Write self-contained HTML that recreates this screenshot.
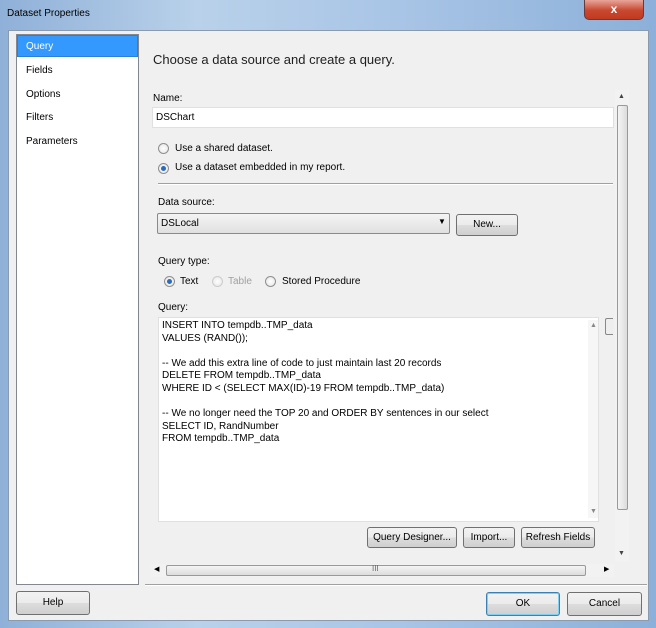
<!DOCTYPE html>
<html><head><style>
*{margin:0;padding:0;box-sizing:border-box}
body{width:656px;height:628px;overflow:hidden;font-family:"Liberation Sans",sans-serif;font-size:10px;color:#000;background:#6d8db5;position:relative}
.a{position:absolute}
.frame{left:0;top:0;width:656px;height:628px;background:linear-gradient(90deg,#8fb0d8,#b9d1ea 30%,#a9c5e6 60%,#8cb0d9);}
.client{left:8px;top:30px;width:641px;height:591px;background:#f0f0f0;border:1px solid #8a9bb0}
.btn{position:absolute;border:1px solid #707070;border-radius:3px;background:linear-gradient(#f2f2f2,#ebebeb 50%,#dddddd 50%,#cfcfcf);text-align:center;font-size:10px}
.radio{position:absolute;width:11px;height:11px;border-radius:50%;border:1px solid #8f8f8f;background:radial-gradient(#fff,#e3e3e3)}
.radio.on::after{content:"";position:absolute;left:2px;top:2px;width:5px;height:5px;border-radius:50%;background:#2a6bbd}
.t{position:absolute;white-space:nowrap}
</style></head><body>
<div class="a frame"></div>
<div class="t" style="left:7px;top:8px;font-size:10px">Dataset Properties</div>
<div class="a" style="left:584px;top:0;width:60px;height:20px;border:1px solid #6a3a3a;border-top:none;border-radius:0 0 5px 5px;background:linear-gradient(#e8a59a,#c8482f 55%,#c13a20);color:#fff;text-align:center;font-weight:bold;font-size:12px;line-height:18px">x</div>
<div class="a client"></div>
<div class="a" style="left:16px;top:34px;width:123px;height:551px;background:#fff;border:1px solid #828790"></div>
<div class="a" style="left:17px;top:35px;width:121px;height:22px;background:#3399ff;border:1px solid #2c7fd9"></div>
<div class="t" style="left:26px;top:41px;color:#fff">Query</div>
<div class="t" style="left:26px;top:65px">Fields</div>
<div class="t" style="left:26px;top:89px">Options</div>
<div class="t" style="left:26px;top:112px">Filters</div>
<div class="t" style="left:26px;top:136px">Parameters</div>
<div class="t" style="left:153px;top:52px;font-size:13px;color:#1e1e1e">Choose a data source and create a query.</div>
<div class="t" style="left:153px;top:93px">Name:</div>
<div class="a" style="left:152px;top:107px;width:462px;height:21px;background:#fff;border:1px solid #e0e0e0"></div>
<div class="t" style="left:156px;top:112px">DSChart</div>
<div class="radio" style="left:158px;top:143px"></div>
<div class="t" style="left:175px;top:143px">Use a shared dataset.</div>
<div class="radio on" style="left:158px;top:163px"></div>
<div class="t" style="left:175px;top:162px">Use a dataset embedded in my report.</div>
<div class="a" style="left:158px;top:183px;width:455px;height:2px;border-top:1px solid #a0a0a0;border-bottom:1px solid #fff"></div>
<div class="t" style="left:158px;top:197px">Data source:</div>
<div class="a" style="left:157px;top:213px;width:293px;height:21px;border:1px solid #8a8a8a;border-radius:2px;background:linear-gradient(#f4f4f4,#e0e0e0)"></div>
<div class="t" style="left:161px;top:218px">DSLocal</div>
<div class="t" style="left:438px;top:217px;font-size:8px">▼</div>
<div class="btn" style="left:456px;top:214px;width:62px;height:22px;line-height:20px">New...</div>
<div class="t" style="left:158px;top:256px">Query type:</div>
<div class="radio on" style="left:164px;top:276px"></div>
<div class="t" style="left:180px;top:276px">Text</div>
<div class="radio" style="left:212px;top:276px;border-color:#ccc"></div>
<div class="t" style="left:228px;top:276px;color:#a0a0a0">Table</div>
<div class="radio" style="left:265px;top:276px"></div>
<div class="t" style="left:282px;top:276px">Stored Procedure</div>
<div class="t" style="left:158px;top:302px">Query:</div>
<div class="a" style="left:158px;top:317px;width:441px;height:205px;background:#fff;border:1px solid #e0e0e0"></div>
<div class="a" style="left:588px;top:320px;width:10px;height:198px;background:#f6f6f6"></div>
<div class="t" style="left:590px;top:322px;font-size:7px;color:#888">▲</div>
<div class="t" style="left:590px;top:508px;font-size:7px;color:#888">▼</div>
<div class="t" style="left:162px;top:320px;line-height:12.6px;font-size:10px">INSERT INTO tempdb..TMP_data<br>VALUES (RAND());<br><br>-- We add this extra line of code to just maintain last 20 records<br>DELETE FROM tempdb..TMP_data<br>WHERE ID &lt; (SELECT MAX(ID)-19 FROM tempdb..TMP_data)<br><br>-- We no longer need the TOP 20 and ORDER BY sentences in our select<br>SELECT ID, RandNumber<br>FROM tempdb..TMP_data</div>
<div class="a" style="left:605px;top:318px;width:8px;height:17px;border:1px solid #888;border-right:none;border-radius:2px 0 0 2px;background:#eee"></div>
<div class="btn" style="left:367px;top:527px;width:90px;height:21px;line-height:19px">Query Designer...</div>
<div class="btn" style="left:463px;top:527px;width:52px;height:21px;line-height:19px">Import...</div>
<div class="btn" style="left:521px;top:527px;width:74px;height:21px;line-height:19px">Refresh Fields</div>
<div class="a" style="left:615px;top:90px;width:14px;height:472px;background:#f2f2f2"></div>
<div class="a" style="left:617px;top:105px;width:11px;height:405px;border:1px solid #999;border-radius:2px;background:linear-gradient(90deg,#f4f4f4,#dcdcdc)"></div>
<div class="t" style="left:618px;top:93px;font-size:7px;color:#444">▲</div>
<div class="t" style="left:618px;top:550px;font-size:7px;color:#444">▼</div>
<div class="a" style="left:150px;top:564px;width:464px;height:13px;background:#f2f2f2"></div>
<div class="a" style="left:166px;top:565px;width:420px;height:11px;border:1px solid #999;border-radius:2px;background:linear-gradient(#f4f4f4,#dcdcdc)"></div>
<div class="t" style="left:154px;top:565px;font-size:7px">◀</div>
<div class="t" style="left:604px;top:565px;font-size:7px">▶</div>
<div class="t" style="left:372px;top:564px;font-size:8px;color:#666">III</div>
<div class="a" style="left:145px;top:584px;width:502px;height:2px;border-top:1px solid #a0a0a0;border-bottom:1px solid #fff"></div>
<div class="btn" style="left:16px;top:591px;width:74px;height:24px;line-height:22px">Help</div>
<div class="btn" style="left:486px;top:592px;width:74px;height:24px;line-height:22px;border-color:#3c7fb1;box-shadow:inset 0 0 0 1px #7ecff2">OK</div>
<div class="btn" style="left:567px;top:592px;width:75px;height:24px;line-height:22px">Cancel</div>
</body></html>
